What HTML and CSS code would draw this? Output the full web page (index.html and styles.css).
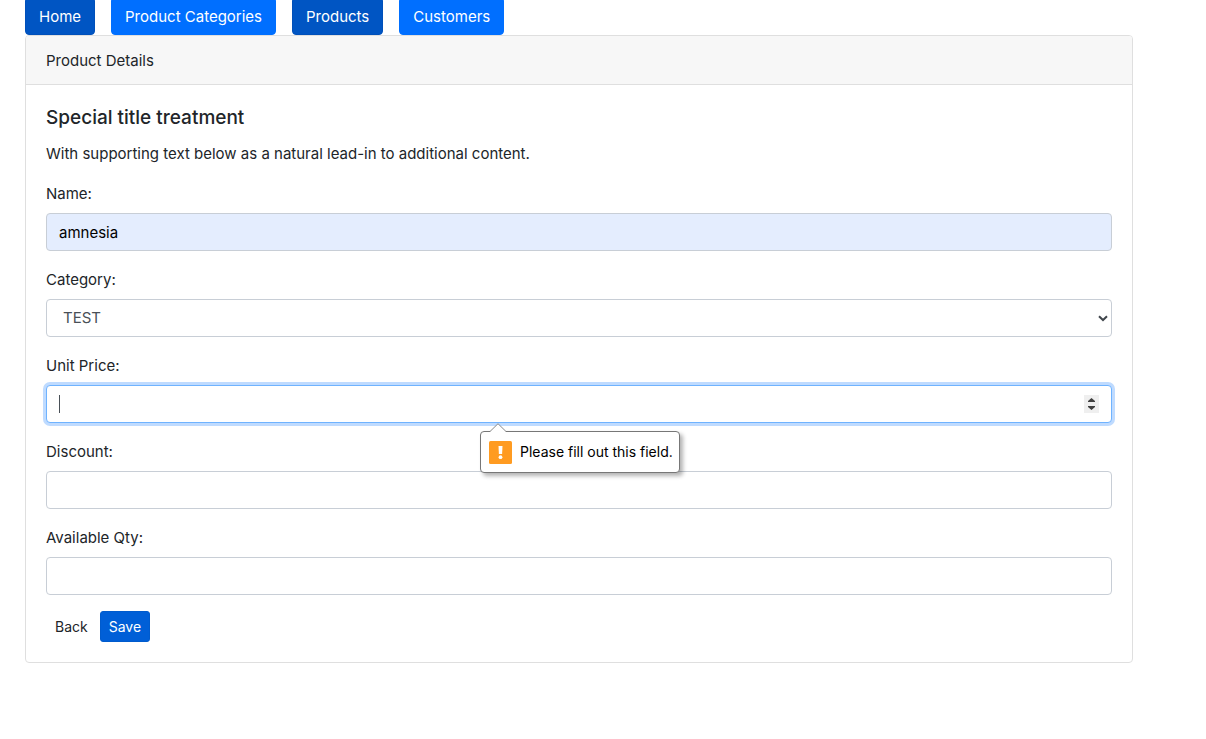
FILE: index.html
```html
<!DOCTYPE html>
<html lang="en">
<head>
<meta charset="utf-8">
<title>Product Details</title>
<link rel="stylesheet" href="styles.css">
</head>
<body>
<div class="page">
  <nav class="nav">
    <a class="nav-link active" href="#">Home</a>
    <a class="nav-link" href="#">Product Categories</a>
    <a class="nav-link active" href="#">Products</a>
    <a class="nav-link" href="#">Customers</a>
  </nav>
  <main class="card">
    <div class="card-header">Product Details</div>
    <form class="card-body" novalidate>
      <h5 class="card-title">Special title treatment</h5>
      <p class="card-text">With supporting text below as a natural lead-in to additional content.</p>
      <div class="group">
        <label for="name">Name:</label>
        <input class="control filled" id="name" type="text" value="amnesia">
      </div>
      <div class="group">
        <label for="category">Category:</label>
        <div class="field">
          <select class="control select" id="category"><option>TEST</option></select>
          <svg class="chevron" width="10" height="7" viewBox="0 0 10 7" aria-hidden="true"><path d="M1 1.2 5 5 9 1.2" fill="none" stroke="#40464c" stroke-width="2"/></svg>
        </div>
      </div>
      <div class="group">
        <label for="price">Unit Price:</label>
        <div class="field">
          <input class="control focused" id="price" type="number" required>
          <span class="caret"></span>
          <svg class="spinner" width="15" height="18" viewBox="0 0 15 18" aria-hidden="true"><path fill="#efefef" d="M0 0h15v18H0z"/><path fill="#404040" d="M4 7h7V6L7.500 3 4 6zM4 11h7v1l-3.500 3L4 12z"/></svg>
          <div class="bubble" role="alert">
            <svg class="bubble-arrow" width="18" height="9" viewBox="0 0 18 9" aria-hidden="true"><path d="M1 8.500 9 .7l8 7.800V9H1z" fill="#fff"/><path d="M1 8.500 9 .7l8 7.800" fill="none" stroke="#888"/></svg>
            <svg width="23" height="23" viewBox="0 0 23 23" aria-hidden="true"><rect width="23" height="23" rx="1.500" fill="#ff9b21"/><path d="M9.500 5h4l-.4 8h-3.200z" fill="#fff"/><circle cx="11.500" cy="16.200" r="1.900" fill="#fff"/></svg>
            <span>Please fill out this field.</span>
          </div>
        </div>
      </div>
      <div class="group">
        <label for="discount">Discount:</label>
        <input class="control" id="discount" type="number">
      </div>
      <div class="group">
        <label for="qty">Available Qty:</label>
        <input class="control" id="qty" type="number">
      </div>
      <div class="actions">
        <a class="btn" href="#">Back</a>
        <button class="btn btn-save" type="submit">Save</button>
      </div>
    </form>
  </main>
</div>
</body>
</html>
```
FILE: styles.css
```css
* { box-sizing: border-box; }
body {
  margin: 0;
  background: #fff;
  color: #212529;
  font: 15px/24px Inter, "Liberation Sans", sans-serif;
}
.page { padding: 0 73px 0 25px; }
.nav { display: flex; gap: 16px; margin-top: -3px; }
.nav-link {
  padding: 7px 13px 5px;
  border: 1px solid #006fff;
  border-width: 1px 0;
  border-radius: 4px;
  background: #006fff;
  color: #fff;
  text-decoration: none;
}
.nav-link { border-width: 1px; padding: 7px 13px 5px; }
.nav-link.active { background: #0055c3; border-color: #0050ba; }
.card { border: 1px solid #dfdfdf; border-radius: 4px; }
.card-header {
  padding: 13px 20px 11px;
  background: #f7f7f7;
  border-bottom: 1px solid #dfdfdf;
  border-radius: 3px 3px 0 0;
}
.card-body { padding: 21px 20px 20px; }
.card-title { margin: 0 0 12px; font-size: 19px; font-weight: 500; }
.card-text { margin: 0 0 16px; }
.group + .group { margin-top: 17px; }
.group label { display: block; width: fit-content; margin-bottom: 7px; }
.field { position: relative; }
.control {
  display: block;
  width: 100%;
  height: 38px;
  padding: 6px 12px;
  border: 1px solid #c8ced6;
  border-radius: 4px;
  background: #fff;
  color: #495057;
  font: inherit;
  outline: 0;
  appearance: none;
}
.control::-webkit-inner-spin-button { appearance: none; }
.control.filled { background: #e4edfe; color: #000; }
.control.select { padding: 6px 16px; }
.control.focused,
.control:focus { border-color: #6fb3ff; box-shadow: 0 0 0 3px #bfdbff; }
.chevron { position: absolute; right: 4px; top: 16px; pointer-events: none; }
.caret { position: absolute; left: 13px; top: 10px; width: 1px; height: 18px; background: #495057; }
.spinner { position: absolute; right: 13px; top: 10px; pointer-events: none; }
.bubble {
  position: absolute;
  z-index: 1;
  left: 434px;
  top: 46px;
  display: flex;
  align-items: center;
  gap: 8px;
  height: 42px;
  padding: 0 6px 0 8px;
  border: 1px solid #777;
  border-radius: 4px;
  background: #fff;
  box-shadow: 3px 3px 4px #0000004d;
  color: #000;
  font-size: 14px;
  line-height: 20px;
  white-space: nowrap;
}
.bubble-arrow { position: absolute; left: 8px; top: -9px; }
.actions { display: flex; gap: 3px; margin-top: 16px; }
.btn {
  padding: 4px 8px;
  border: 1px solid transparent;
  border-radius: 3px;
  background: transparent;
  color: #212529;
  font: 14px/21px Inter, "Liberation Sans", sans-serif;
  text-decoration: none;
}
.btn-save { background: #005fd7; border-color: #005bcd; color: #fff; }
```
